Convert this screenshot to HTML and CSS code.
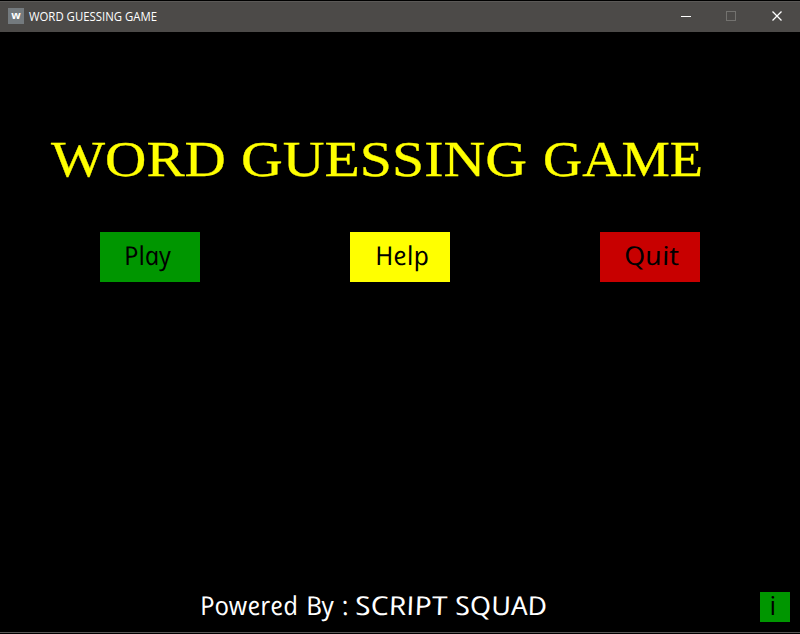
FILE: index.html
```
<!DOCTYPE html>
<html lang="en">
<head>
<meta charset="utf-8">
<title>WORD GUESSING GAME</title>
<link rel="stylesheet" href="styles.css">
</head>
<body>
<div class="window">
  <header class="titlebar">
    <span class="app-icon">w</span>
    <svg class="caption" width="132" height="24"><text x="0" y="16" textLength="128" lengthAdjust="spacingAndGlyphs">WORD GUESSING GAME</text></svg>
    <div class="controls">
      <svg width="46" height="30"><path d="M18 14.5h10" stroke="#fff"/></svg>
      <svg width="45" height="30"><rect x="17.5" y="9.5" width="9" height="9" fill="none" stroke="#73726f"/></svg>
      <svg width="46" height="30"><path d="M18.5 9.5l9 9M27.500 9.500l-9 9" stroke="#fff" stroke-width="1.3"/></svg>
    </div>
  </header>
  <main class="stage">
    <svg class="heading" width="800" height="60">
      <text x="51" y="46" textLength="175" lengthAdjust="spacingAndGlyphs">WORD</text>
      <text x="241" y="46" textLength="286" lengthAdjust="spacingAndGlyphs">GUESSING</text>
      <text x="543" y="46" textLength="160" lengthAdjust="spacingAndGlyphs">GAME</text>
    </svg>
    <nav class="menu">
      <button class="btn play"><svg class="hand" width="100" height="50"><g transform="translate(25.500 33) skewX(12)"><text textLength="47" lengthAdjust="spacingAndGlyphs">Play</text></g></svg></button>
      <button class="btn help"><svg class="hand" width="100" height="50"><g transform="translate(26.500 33) skewX(12)"><text textLength="54" lengthAdjust="spacingAndGlyphs">Help</text></g></svg></button>
      <button class="btn quit"><svg class="hand" width="100" height="50"><g transform="translate(25.500 33) skewX(12)"><text textLength="55" lengthAdjust="spacingAndGlyphs">Quit</text></g></svg></button>
    </nav>
    <footer class="footer">
      <svg class="hand credit" width="400" height="40"><g transform="translate(1.500 23) skewX(12)">
        <text x="0" textLength="98" lengthAdjust="spacingAndGlyphs">Powered</text>
        <text x="106" textLength="28" lengthAdjust="spacingAndGlyphs">By</text>
        <text x="142">:</text>
        <text x="155" textLength="92" lengthAdjust="spacingAndGlyphs">SCRIPT</text>
        <text x="255" textLength="92" lengthAdjust="spacingAndGlyphs">SQUAD</text>
      </g></svg>
      <button class="info"><svg class="hand" width="30" height="30"><g transform="translate(11 23) skewX(12)"><text>i</text></g></svg></button>
    </footer>
  </main>
</div>
</body>
</html>
```
FILE: styles.css
```
* { box-sizing: border-box; }
body { margin: 0; background: #000; }
svg { display: block; overflow: visible; }
button { border: 0; padding: 0; }
.window { height: 634px; display: flex; flex-direction: column; border-top: 1px solid #000; border-bottom: 1px solid #000; }
.titlebar { height: 31px; flex: none; display: flex; align-items: center; padding-left: 8px; background: #4c4a48; border-top: 1px solid #5b5957; }
.app-icon { width: 16px; height: 16px; margin: -2px 5px 0 0; background: #747a7e; color: #fff; font: bold 11px/14px "Open Sans", sans-serif; text-align: center; }
.caption { font: 12px "Open Sans", sans-serif; fill: #fff; }
.controls { display: flex; margin-left: auto; }
.stage { flex: 1; display: flex; flex-direction: column; padding-top: 98px; border-bottom: 1px solid #5a5856; }
.heading { flex: none; font: 51px "Liberation Serif", serif; fill: #ff0; stroke: #ff0; stroke-width: 0.3px; }
.menu { display: flex; gap: 150px; padding: 42px 100px 0; }
.btn { width: 100px; height: 50px; }
.play, .info { background: #009600; }
.help { background: #ff0; }
.quit { background: #c80000; }
.hand { font: italic 26px "Open Sans", sans-serif; fill: #000; }
.footer { display: flex; justify-content: space-between; margin-top: auto; height: 40px; padding: 0 10px 0 200px; }
.credit { fill: #fff; }
.info { width: 30px; height: 30px; }
```
